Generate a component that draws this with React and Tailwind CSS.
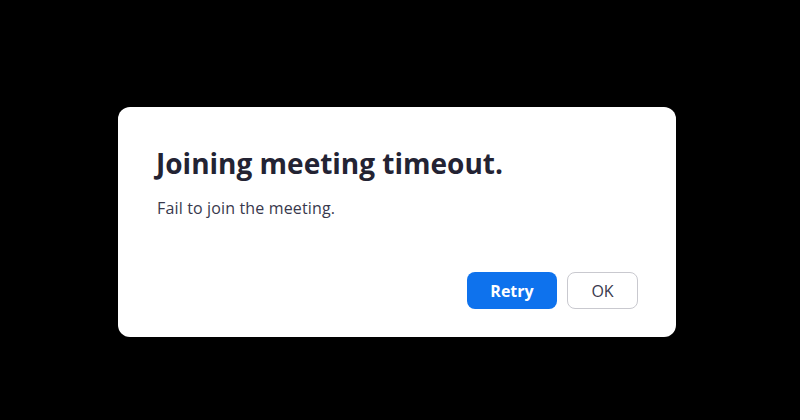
import React from 'react'

const font = { fontFamily: '"Open Sans", "Noto Sans", sans-serif' }

const TimeoutDialog = () => {
  return (
    <div className="w-[558px] h-[230px] bg-white rounded-[12px] flex flex-col pl-[37px] pr-[38px] pt-[38px] pb-[28px]">
      <h2 className="text-[28px] leading-[36px] font-bold text-[#232333] pl-[1px]">Joining meeting timeout.</h2>
      <p className="mt-[16px] text-[16px] leading-[22px] tracking-[0.15px] text-[#39394d] pl-[2px]">Fail to join the meeting.</p>
      <div className="mt-auto flex justify-end gap-[10px]">
        <button className="w-[90px] h-[37px] rounded-[8px] bg-[#0e72ed] text-white text-[16px] font-bold">
          Retry
        </button>
        <button className="w-[71px] h-[37px] rounded-[8px] border border-[#c9c9cf] bg-white text-[#39394d] text-[16px]">
          OK
        </button>
      </div>
    </div>
  )
}

export default function App() {
  return (
    <div className="w-[800px] h-[420px] bg-black flex justify-center items-start pt-[107px] pr-[6px]" style={font}>
      <TimeoutDialog />
    </div>
  )
}
